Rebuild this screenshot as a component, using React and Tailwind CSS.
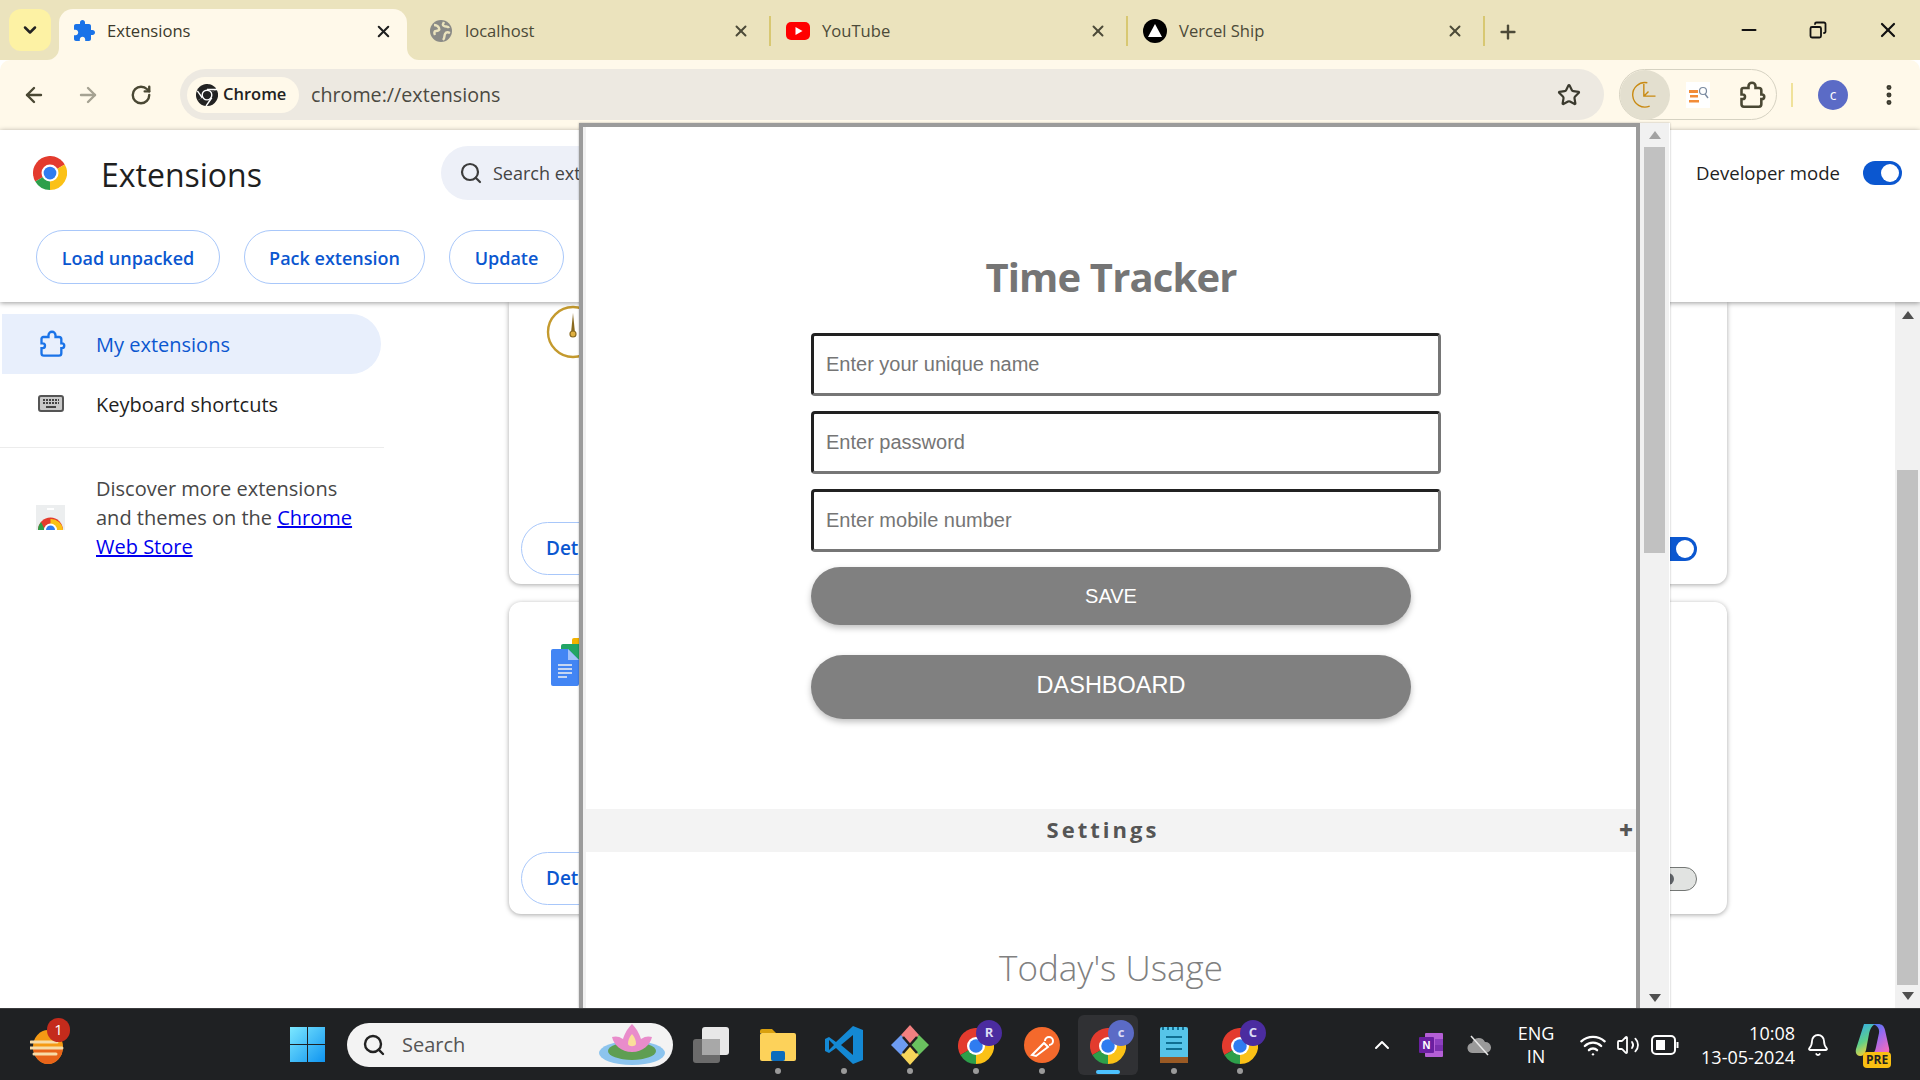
import React from 'react';
import { ArrowLeft, ArrowRight, RotateCw, X, Plus, Minus, Star, EllipsisVertical, Search, ChevronDown, ChevronUp, Bell, Wifi, Volume2, Copy } from 'lucide-react';

const PUZZLE = 'M20.5 11H19V7c0-1.1-.9-2-2-2h-4V3.5C13 2.12 11.88 1 10.5 1S8 2.12 8 3.5V5H4c-1.1 0-1.99.9-1.99 2v3.8H3.5c1.49 0 2.7 1.21 2.7 2.7s-1.21 2.7-2.7 2.7H2V20c0 1.1.9 2 2 2h3.8v-1.5c0-1.49 1.21-2.7 2.7-2.7 1.49 0 2.7 1.21 2.7 2.7V22H17c1.1 0 2-.9 2-2v-4h1.5c1.38 0 2.5-1.12 2.5-2.5S21.88 11 20.5 11z';
const PUZZLE_OUTLINE = 'M4.5 6H9V4.5a3 3 0 0 1 6 0V6h3a2 2 0 0 1 2 2v3.5h.5a2 2 0 0 1 0 4H20V20a2 2 0 0 1-2 2H5a2 2 0 0 1-2-2v-4.5h1a2 2 0 0 0 0-4H3V7.500A1.500 1.500 0 0 1 4.500 6z';

function ChromeLogo({ className, mono }) {
  return (
    <svg viewBox="0 0 48 48" className={className}>
      <path d="M24 24L3.2 36A24 24 0 0 1 44.8 12Z" fill={mono ? '#222' : '#e33b2e'} />
      <path d="M24 24L44.8 12A24 24 0 0 1 24 48Z" fill={mono ? '#222' : '#fbc116'} />
      <path d="M24 24L24 48A24 24 0 0 1 3.2 36Z" fill={mono ? '#222' : '#2d9f4a'} />
      <circle cx="24" cy="24" r="12" fill="#fff" />
      <circle cx="24" cy="24" r="9" fill={mono ? '#222' : '#2f7cf0'} />
      {mono && <path d="M24 12H46M13.600 30L3 15M34.400 30L22 48" stroke="#fff" strokeWidth="3" />}
    </svg>
  );
}

function Tab({ icon, label, active, divider }) {
  if (active) {
    return (
      <div className="relative ml-[8px] mr-[7px] flex h-[51px] w-[348px] items-center rounded-t-[14px] bg-[#fff9ea] pb-[7px] pl-[13px] pr-[14px] text-[#3c3a2c]">
        {icon}
        <span className="ml-[11px] flex-1 text-[16.6px]">{label}</span>
        <X className="h-[19px] w-[19px] text-[#1f1f1f]" strokeWidth={2.6} />
        <svg viewBox="0 0 12 12" className="absolute -left-[12px] bottom-0 h-[12px] w-[12px]"><path d="M12 0A12 12 0 0 1 0 12H12Z" fill="#fff9ea" /></svg>
        <svg viewBox="0 0 12 12" className="absolute -right-[12px] bottom-0 h-[12px] w-[12px]"><path d="M0 0A12 12 0 0 0 12 12H0Z" fill="#fff9ea" /></svg>
      </div>
    );
  }
  return (
    <div className="flex h-[51px] w-[357px] items-center pb-[7px] pl-[15px] text-[#4c4a38]">
      {icon}
      <span className="ml-[12px] flex-1 text-[16.6px]">{label}</span>
      <X className="h-[18px] w-[18px] text-[#4c4a38]" strokeWidth={2.6} />
      <span className={`ml-[19px] h-[30px] w-[2px] ${divider ? 'bg-[#d8c872]' : ''}`} />
    </div>
  );
}

function LinkButton({ children, className }) {
  return (
    <button className={`h-[54px] rounded-full border border-[#a8c7fa] bg-white pt-[2px] text-[18px] font-semibold text-[#0b57d0] ${className}`}>
      {children}
    </button>
  );
}

function Toggle({ on }) {
  return on ? (
    <div className="flex h-[24px] w-[39px] items-center justify-end rounded-full bg-[#0b57d0] pr-[3px]">
      <div className="h-[18px] w-[18px] rounded-full bg-white" />
    </div>
  ) : (
    <div className="flex h-[24px] w-[39px] items-center rounded-full border border-[#747775] bg-[#e1e3e1] pl-[3px]">
      <div className="h-[12px] w-[12px] rounded-full bg-[#5f6368]" />
    </div>
  );
}

function Card({ height, children, top, toggle }) {
  return (
    <div className={`flex flex-col justify-between overflow-hidden bg-white px-[12px] pb-[9px] shadow-[0_1px_5px_rgba(0,0,0,0.35)] ${height} ${top ? 'rounded-b-[12px]' : 'mt-[18px] rounded-[12px]'}`}>
      {children}
      <div className="flex items-center justify-between pr-[18px]">
        <button className="h-[53px] w-[150px] rounded-full border border-[#a8c7fa] pl-[24px] text-left text-[19px] font-semibold text-[#0b57d0]">Details</button>
        {toggle}
      </div>
    </div>
  );
}

function Arrow({ down, dark }) {
  return (
    <svg viewBox="0 0 12 8" className="h-[8px] w-[12px]">
      <path d={down ? 'M0 0H12L6 8Z' : 'M0 8H12L6 0Z'} fill={dark ? '#505050' : '#a3a3a3'} />
    </svg>
  );
}

function TaskCell({ children, dot, active }) {
  return (
    <div className={`relative mx-[3px] flex h-[60px] w-[60px] items-center justify-center rounded-[6px] ${active ? 'bg-[#303134]' : ''}`}>
      {children}
      {dot && <span className="absolute bottom-[1px] h-[6px] w-[6px] rounded-full bg-[#9a9a9a]" />}
      {active && <span className="absolute bottom-[1px] h-[4px] w-[24px] rounded-full bg-[#4cc2ff]" />}
    </div>
  );
}

function ChromeBadge({ letter, color }) {
  return (
    <div className="relative h-[40px] w-[36px]">
      <ChromeLogo className="absolute left-0 top-[3px] h-[36px] w-[36px]" />
      <span className={`absolute -right-[8px] -top-[5px] flex h-[26px] w-[26px] items-center justify-center rounded-full text-[13px] font-bold text-[#dcdcf5] ${color}`}>{letter}</span>
    </div>
  );
}

export default function App() {
  return (
    <div className="relative flex h-[1080px] w-[1920px] flex-col overflow-hidden bg-white font-['Open_Sans',sans-serif]">
      {/* tab strip */}
      <div className="flex h-[60px] items-end bg-[#ebe3bd] pl-[9px]">
        <div className="mb-[9px] flex h-[42px] w-[42px] items-center justify-center rounded-[12px] bg-[#fdf2a4]">
          <ChevronDown className="h-[20px] w-[20px] text-[#222]" strokeWidth={3} />
        </div>
        <Tab active label="Extensions" icon={<svg viewBox="0 0 24 24" className="h-[24px] w-[24px]"><path d={PUZZLE} fill="#1a73e8" /></svg>} />
        <Tab label="localhost" divider icon={
          <svg viewBox="0 0 24 24" className="h-[24px] w-[24px]"><circle cx="12" cy="12" r="11" fill="#8a8a86" /><path d="M5 6c3 0 4 1 5 3s-1 3-3 3-2 2-1 4M15 3c-1 2-2 3 0 4s4 0 5 2M21 14c-2-1-4-1-5 1s0 4-2 6" stroke="#ebe3bd" strokeWidth="2.4" fill="none" /></svg>
        } />
        <Tab label="YouTube" divider icon={
          <svg viewBox="0 0 24 24" className="h-[24px] w-[24px]"><rect y="3" width="24" height="18" rx="5" fill="#f00" /><path d="M9.5 8l7 4-7 4z" fill="#fff" /></svg>
        } />
        <Tab label="Vercel Ship" divider icon={
          <svg viewBox="0 0 24 24" className="h-[24px] w-[24px]"><circle cx="12" cy="12" r="12" fill="#000" /><path d="M12 5l7 13H5z" fill="#fff" /></svg>
        } />
        <div className="mb-[16px] ml-[11px] flex h-[24px] w-[24px] items-center justify-center">
          <Plus className="h-[22px] w-[22px] text-[#4c4a38]" strokeWidth={2.6} />
        </div>
        <div className="mb-[18px] ml-[218px] flex h-[24px] items-center gap-[49px] text-[#111]">
          <Minus className="h-[22px] w-[22px]" strokeWidth={2.4} />
          <Copy className="h-[18px] w-[18px] -scale-x-100" strokeWidth={2.4} />
          <X className="h-[24px] w-[24px]" strokeWidth={2.2} />
        </div>
      </div>

      {/* toolbar */}
      <div className="flex h-[70px] items-center rounded-t-[10px] bg-[#fff9ea] pb-[1px] pl-[22px]">
        <ArrowLeft className="h-[24px] w-[24px] text-[#4a4834]" strokeWidth={2.4} />
        <ArrowRight className="ml-[30px] h-[24px] w-[24px] text-[#a5a292]" strokeWidth={2.4} />
        <RotateCw className="ml-[30px] h-[22px] w-[22px] text-[#4a4834]" strokeWidth={2.6} />
        <div className="ml-[28px] flex h-[51px] w-[1424px] items-center rounded-full bg-[#ede9e1] pl-[7px] pr-[23px]">
          <div className="flex h-[36px] w-[112px] items-center rounded-full bg-[#fff9ea] pl-[9px]">
            <ChromeLogo mono className="h-[22px] w-[22px]" />
            <span className="ml-[5px] text-[16.5px] font-semibold text-[#222]">Chrome</span>
          </div>
          <span className="ml-[12px] flex-1 text-[19.7px] text-[#4b4a42]">chrome://extensions</span>
          <Star className="h-[24px] w-[24px] text-[#3b3a2e]" strokeWidth={2.2} />
        </div>
        <div className="ml-[15px] flex h-[51px] w-[158px] items-center rounded-full border border-[#d6d2c2]">
          <div className="flex h-[50px] w-[50px] items-center justify-center rounded-full bg-[#e3dfcf]">
            <svg viewBox="0 0 24 24" className="h-[28px] w-[28px]" fill="none" stroke="#c98a12" strokeWidth="1.2"><path d="M14 1.500A10.500 10.500 0 1 0 16 21.500M11 2.500V13H21M11 13L15 9" /></svg>
          </div>
          <div className="ml-[16px] flex h-[26px] w-[24px] flex-col items-center justify-center bg-white">
            <svg viewBox="0 0 24 26" className="h-[26px] w-[24px]"><rect x="3" y="8" width="9" height="3" fill="#f28c38" /><rect x="4" y="13" width="8" height="2.500" fill="#f28c38" /><rect x="3" y="18" width="10" height="2.500" fill="#f28c38" /><circle cx="17" cy="9" r="3.500" fill="none" stroke="#7a8aa0" strokeWidth="1.2" /><path d="M19 12l3 4" stroke="#7a8aa0" strokeWidth="1.400" /></svg>
          </div>
          <svg viewBox="0 0 24 24" className="ml-[28px] h-[28px] w-[28px]" fill="none" stroke="#4a4834" strokeWidth="2.200"><path d={PUZZLE_OUTLINE} /></svg>
        </div>
        <span className="ml-[14px] h-[24px] w-[2px] bg-[#f0e29a]" />
        <div className="ml-[25px] flex h-[30px] w-[30px] items-center justify-center rounded-full bg-[#5b6bc6] text-[14px] text-white">c</div>
        <EllipsisVertical className="ml-[28px] h-[26px] w-[26px] text-[#3b3a2e]" strokeWidth={2.6} />
      </div>

      {/* extensions header */}
      <div className="relative z-10 h-[172px] bg-white pl-[33px] pr-[18px] pt-[16px] shadow-[0_1px_5px_rgba(0,0,0,0.4)]">
        <div className="flex items-center">
          <ChromeLogo className="h-[34px] w-[34px]" />
          <h1 className="ml-[34px] mt-[4px] w-[340px] text-[32px] leading-[50px] text-[#1f1f1f]">Extensions</h1>
          <div className="flex h-[54px] w-[600px] items-center rounded-full bg-[#edf0f8] pl-[18px]">
            <Search className="h-[24px] w-[24px] text-[#3c3c3c]" strokeWidth={2.2} />
            <span className="ml-[10px] text-[18px] text-[#444]">Search extensions</span>
          </div>
          <span className="ml-auto text-[18.6px] text-[#1f1f1f]">Developer mode</span>
          <div className="ml-[23px]"><Toggle on /></div>
        </div>
        <div className="mt-[30px] flex gap-[24px] pl-[3px]">
          <LinkButton className="w-[184px]">Load unpacked</LinkButton>
          <LinkButton className="w-[181px]">Pack extension</LinkButton>
          <LinkButton className="w-[115px]">Update</LinkButton>
        </div>
      </div>

      {/* body */}
      <div className="flex min-h-0 flex-1">
        <aside className="w-[509px] pt-[12px]">
          <div className="ml-[2px] flex h-[60px] w-[379px] items-center rounded-r-full bg-[#e8effc] pl-[36px] text-[20px] font-medium text-[#0b57d0]">
            <svg viewBox="0 0 24 24" className="h-[28px] w-[28px]" fill="none" stroke="#1a73e8" strokeWidth="2"><path d={PUZZLE_OUTLINE} /></svg>
            <span className="ml-[30px] pt-[1px]">My extensions</span>
          </div>
          <div className="flex h-[60px] items-center pl-[38px] text-[20px] font-medium text-[#1f1f1f]">
            <svg viewBox="0 0 26 18" className="h-[18px] w-[26px]"><rect x="1" y="1" width="24" height="15" rx="2" fill="#c9c9c9" stroke="#555" strokeWidth="2" /><path d="M5 5h16M5 8h16" stroke="#444" strokeWidth="2" strokeDasharray="2 1" /><path d="M8 12h10" stroke="#444" strokeWidth="2" /></svg>
            <span className="ml-[32px] pt-[1px]">Keyboard shortcuts</span>
          </div>
          <div className="mt-[13px] h-px w-[384px] bg-[#ececec]" />
          <div className="mt-[26px] flex items-center pl-[36px]">
            <svg viewBox="0 0 29 25" className="h-[25px] w-[29px]">
              <path d="M0 0H29V25H0Z" fill="#eceeef" />
              <rect x="11" y="3" width="7" height="2" fill="#fff" />
              <path d="M2 25A12 12 0 0 1 27 25Z" fill="#e33b2e" />
              <path d="M14.500 25V14A12 12 0 0 1 27 25Z" fill="#fbc116" />
              <path d="M2 25A12 12 0 0 1 5 17L9 25Z" fill="#2d9f4a" />
              <path d="M8 25A6.500 6.500 0 0 1 21 25Z" fill="#fff" />
              <path d="M10 25A4.500 4.500 0 0 1 19 25Z" fill="#2f7cf0" />
            </svg>
            <p className="ml-[31px] w-[265px] text-[20px] leading-[29px] text-[#474747]">
              Discover more extensions and themes on the <a href="#" className="text-[#0000ee] underline">Chrome Web Store</a>
            </p>
          </div>
        </aside>

        <main className="w-[1218px]">
          <Card top height="h-[282px]" toggle={<div className="ml-auto"><Toggle on /></div>}>
            <svg viewBox="0 0 54 54" className="ml-[25px] mt-[3px] h-[54px] w-[54px]" fill="none" stroke="#c49a2e" strokeWidth="2.400">
              <circle cx="27" cy="27" r="25" />
              <path d="M27 8l-2 20h4z" fill="#8a6a20" stroke="none" />
              <circle cx="27" cy="29" r="3" fill="#e0b040" stroke="#8a6a20" strokeWidth="1.200" />
            </svg>
          </Card>
          <Card height="h-[312px]" toggle={<Toggle />}>
            <svg viewBox="0 0 44 48" className="ml-[30px] mt-[36px] h-[48px] w-[44px]">
              <rect x="21" y="0" width="14" height="14" rx="2" fill="#f4b400" />
              <rect x="10" y="6" width="30" height="26" rx="2" fill="#22a565" />
              <path d="M0 13a2 2 0 0 1 2-2h15l11 11v24a2 2 0 0 1-2 2H2a2 2 0 0 1-2-2z" fill="#4285f4" />
              <path d="M17 11l11 11H17z" fill="#a1c2fa" />
              <path d="M7 27h14M7 31h14M7 35h14M7 39h9" stroke="#f1f1f1" strokeWidth="1.600" />
            </svg>
          </Card>
        </main>

        <div className="ml-auto flex w-[25px] flex-col items-center bg-[#f1f1f1] pt-[9px]">
          <Arrow dark />
          <div className="mt-[151px] h-[515px] w-[21px] bg-[#c1c1c1]" />
          <div className="mt-[7px]"><Arrow down dark /></div>
        </div>
      </div>

      {/* taskbar */}
      <div className="relative z-30 flex h-[72px] items-center border-t border-[#3a3b3d] bg-[#1f2123] pl-[30px]">
        <div className="relative h-[40px] w-[35px]">
          <svg viewBox="0 0 35 36" className="absolute left-0 top-[4px] h-[36px] w-[35px]">
            <ellipse cx="18" cy="18" rx="15" ry="17" fill="#f59a14" />
            <path d="M18 35a15 17 0 0 0 15-17H3a15 17 0 0 0 15 17z" fill="#e8641a" />
            <path d="M1 13h26M0 19h32M4 25h22" stroke="#f7dca8" strokeWidth="3" strokeLinecap="round" />
          </svg>
          <span className="absolute -top-[7px] left-[17px] flex h-[24px] w-[23px] items-center justify-center rounded-full bg-[#c42b1c] text-[15px] text-white">1</span>
        </div>
        <svg viewBox="0 0 35 35" className="ml-[225px] h-[35px] w-[35px]">
          <defs><linearGradient id="win" x1="0" y1="0" x2="1" y2="1"><stop offset="0" stopColor="#7ce8ff" /><stop offset="1" stopColor="#0f94f0" /></linearGradient></defs>
          <path d="M0 0H17V17H0ZM18 0H35V17H18ZM0 18H17V35H0ZM18 18H35V35H18Z" fill="url(#win)" />
        </svg>
        <div className="relative ml-[22px] flex h-[44px] w-[326px] items-center rounded-full bg-[#f3f3f3] pl-[15px]">
          <Search className="h-[24px] w-[24px] text-[#222]" strokeWidth={2.4} />
          <span className="ml-[16px] text-[20px] text-[#555]">Search</span>
          <svg viewBox="0 0 68 50" className="absolute -top-[7px] right-[7px] h-[50px] w-[68px]">
            <ellipse cx="34" cy="37" rx="33" ry="12" fill="#8cc4ee" />
            <ellipse cx="34" cy="35" rx="24" ry="9" fill="#5f9e52" />
            <path d="M34 8c6 6 8 12 9 15 4-3 8-3 11-2-2 8-9 15-20 15s-18-7-20-15c3-1 7-1 11 2 1-3 3-9 9-15z" fill="#e98ccb" />
            <path d="M34 18c3 3 4 7 4 10-1 3-7 3-8 0 0-3 1-7 4-10z" fill="#fadf9a" />
          </svg>
        </div>
        <div className="ml-[6px] flex">
          <TaskCell>
            <svg viewBox="0 0 38 36" className="h-[36px] w-[38px]"><rect x="0" y="12" width="27" height="24" rx="3" fill="#6b6b6b" /><rect x="9" y="0" width="27" height="28" rx="3" fill="#e8e8e8" /><rect x="9" y="12" width="18" height="16" fill="#a8a8a8" /></svg>
          </TaskCell>
          <TaskCell dot>
            <svg viewBox="0 0 36 32" className="h-[32px] w-[36px]"><path d="M0 2a2 2 0 0 1 2-2h10l4 4H0z" fill="#d9a00f" /><rect y="4" width="36" height="28" rx="2" fill="#fdd25a" /><rect x="11" y="22" width="14" height="10" rx="2" fill="#0b6cbd" /></svg>
          </TaskCell>
          <TaskCell dot>
            <svg viewBox="0 0 38 38" className="h-[38px] w-[38px]"><path d="M28 0l10 4v30l-10 4-17-16-7 5-4-2V13l4-2 7 5z" fill="#1489d4" /><path d="M28 9L16 19l12 10z" fill="#1f2123" /><path d="M4 14l5 5-5 5z" fill="#1f2123" /></svg>
          </TaskCell>
          <TaskCell dot>
            <svg viewBox="0 0 38 40" className="h-[40px] w-[38px]"><path d="M19 0l9 10-9 10-9-10z" fill="#f28080" /><path d="M28 10l10 10-10 10-9-10z" fill="#6ac25f" /><path d="M10 10l9 10-9 10L0 20z" fill="#6d9cf2" /><path d="M19 20l9 10-9 10-9-10z" fill="#f7d65a" /><path d="M12 12l14 16M26 12L12 28" stroke="#222" strokeWidth="2.500" /></svg>
          </TaskCell>
          <TaskCell dot><ChromeBadge letter="R" color="bg-[#4b2ca0]" /></TaskCell>
          <TaskCell dot>
            <svg viewBox="0 0 36 36" className="h-[36px] w-[36px]"><circle cx="18" cy="18" r="18" fill="#f4692c" /><path d="M8 28l12-12 4 4-12 9zM21 14a4 4 0 1 1 4 4" fill="none" stroke="#fff" strokeWidth="2" /></svg>
          </TaskCell>
          <TaskCell active><ChromeBadge letter="c" color="bg-[#5b6bc6]" /></TaskCell>
          <TaskCell dot>
            <svg viewBox="0 0 28 36" className="h-[36px] w-[28px]"><rect width="28" height="36" rx="2" fill="#56c4e8" /><rect y="30" width="28" height="6" fill="#9a5a24" /><path d="M6 10h16M6 16h16M6 22h16" stroke="#0f6f92" strokeWidth="2" /><path d="M3 0v3M8 0v3M13 0v3M18 0v3M23 0v3" stroke="#0f6f92" strokeWidth="2" /></svg>
          </TaskCell>
          <TaskCell dot><ChromeBadge letter="C" color="bg-[#4b2ca0]" /></TaskCell>
        </div>
        <ChevronUp className="ml-[97px] h-[24px] w-[24px] text-white" strokeWidth={2} />
        <svg viewBox="0 0 24 24" className="ml-[25px] h-[24px] w-[24px]"><rect x="6" width="18" height="24" rx="1" fill="#b45fd6" /><rect x="16" y="6" width="8" height="6" fill="#8d3fc0" /><rect x="16" y="12" width="8" height="6" fill="#7a2fae" /><rect y="4" width="15" height="16" rx="1" fill="#6a1fa0" /><text x="7.500" y="16" fontSize="11" fontWeight="700" textAnchor="middle" fill="#fff" fontFamily="Liberation Sans, sans-serif">N</text></svg>
        <svg viewBox="0 0 24 24" className="ml-[24px] h-[24px] w-[24px]"><path d="M6 20a5 5 0 0 1-1-10 7 7 0 0 1 13-1 5.500 5.500 0 0 1 1 11z" fill="#9a9a9a" /><path d="M4 3l17 19" stroke="#e8e8e8" strokeWidth="1.500" /></svg>
        <div className="ml-[15px] w-[60px] text-center text-[18px] leading-[23px] text-white">ENG<br />IN</div>
        <Wifi className="ml-[13px] h-[28px] w-[28px] text-white" strokeWidth={2} />
        <Volume2 className="ml-[9px] h-[24px] w-[24px] text-white" strokeWidth={1.8} />
        <svg viewBox="0 0 28 20" className="ml-[11px] h-[20px] w-[28px]" fill="none" stroke="#fff" strokeWidth="2"><rect x="1" y="1" width="23" height="18" rx="4" /><rect x="5" y="5" width="9" height="10" fill="#fff" stroke="none" /><path d="M26.500 7v6" /></svg>
        <div className="ml-[6px] w-[110px] text-right text-[18px] leading-[24px] text-white">10:08<br />13-05-2024</div>
        <Bell className="ml-[11px] h-[24px] w-[24px] text-white" strokeWidth={1.8} />
        <div className="relative ml-[25px] h-[46px] w-[35px]">
          <svg viewBox="0 0 35 40" className="absolute left-0 top-0 h-[40px] w-[35px]">
            <defs>
              <linearGradient id="copl" x1="0" y1="0" x2="0.400" y2="1"><stop offset="0" stopColor="#2ea8f0" /><stop offset="0.600" stopColor="#5fd08a" /><stop offset="1" stopColor="#f4d23a" /></linearGradient>
              <linearGradient id="copr" x1="0" y1="0" x2="0.600" y2="1"><stop offset="0" stopColor="#2e7cf0" /><stop offset="0.500" stopColor="#9a6af0" /><stop offset="1" stopColor="#f06bc0" /></linearGradient>
            </defs>
            <path d="M9 2h12c-4 1-6 5-7 10l-3 16c-1 4-3 6-6 6-3 0-5-3-4-7z" fill="url(#copl)" />
            <path d="M16 2h7c4 0 6 2 7 6l4 18c1 4-1 8-5 8H14c4-1 6-4 7-9l3-14c1-5-3-9-8-9z" fill="url(#copr)" />
          </svg>
          <span className="absolute bottom-0 left-[8px] rounded-[4px] bg-[#f9bf12] px-[3px] text-[12px] font-bold leading-[16px] text-[#222]">PRE</span>
        </div>
      </div>

      {/* popup */}
      <div className="absolute left-[579px] top-[123px] z-20 flex h-[885px] w-[1091px] bg-white shadow-[0_0_2px_rgba(0,0,0,0.3)]">
        <div className="w-[1061px] overflow-hidden border-x-4 border-t-4 border-[#9b9b9b] bg-white">
          <div className="h-full overflow-hidden border-l-[3px] border-[#f1f1f1]">
            <h2 className="mt-[120px] h-[60px] text-center text-[40px] font-bold leading-[60px] tracking-[-0.85px] text-[#757575]">Time Tracker</h2>
            <div className="mx-auto mt-[26px] w-[600px]">
              <div className="flex flex-col gap-[15px]">
                <input placeholder="Enter your unique name" className="h-[63px] w-[630px] rounded-[4px] border-[3px] border-b-[#767676] border-l-[#212121] border-r-[#767676] border-t-[#212121] pl-[12px] font-['Liberation_Sans',sans-serif] text-[20px] placeholder:text-[#757575]" />
                <input placeholder="Enter password" className="h-[63px] w-[630px] rounded-[4px] border-[3px] border-b-[#767676] border-l-[#212121] border-r-[#767676] border-t-[#212121] pl-[12px] font-['Liberation_Sans',sans-serif] text-[20px] placeholder:text-[#757575]" />
                <input placeholder="Enter mobile number" className="h-[63px] w-[630px] rounded-[4px] border-[3px] border-b-[#767676] border-l-[#212121] border-r-[#767676] border-t-[#212121] pl-[12px] font-['Liberation_Sans',sans-serif] text-[20px] placeholder:text-[#757575]" />
              </div>
              <button className="mt-[15px] block h-[58px] w-full rounded-[30px] bg-[#808080] font-['Liberation_Sans',sans-serif] text-[20px] text-white shadow-[0_3px_6px_rgba(0,0,0,0.25)]">SAVE</button>
              <button className="mt-[30px] block h-[64px] w-full rounded-[32px] bg-[#808080] pb-[2px] font-['Liberation_Sans',sans-serif] text-[23.5px] text-white shadow-[0_3px_6px_rgba(0,0,0,0.25)]">DASHBOARD</button>
            </div>
            <div className="relative mt-[90px] flex h-[43px] items-center justify-center bg-[#f3f3f3] pb-[2px] pr-[16px]">
              <span className="text-[22px] font-bold tracking-[3px] text-[#555]">Settings</span>
              <span className="absolute right-[3px] text-[24px] font-extrabold text-[#555]">+</span>
            </div>
            <h3 className="mt-[91px] text-center text-[35px] font-light leading-[50px] text-[#808080]">Today's Usage</h3>
          </div>
        </div>
        <div className="flex w-[30px] flex-col items-center border-r border-white bg-[#f1f1f1] pt-[8px]">
          <Arrow />
          <div className="mt-[8px] h-[406px] w-[21px] bg-[#c1c1c1]" />
          <div className="mb-[6px] mt-auto"><Arrow down dark /></div>
        </div>
      </div>
    </div>
  );
}
